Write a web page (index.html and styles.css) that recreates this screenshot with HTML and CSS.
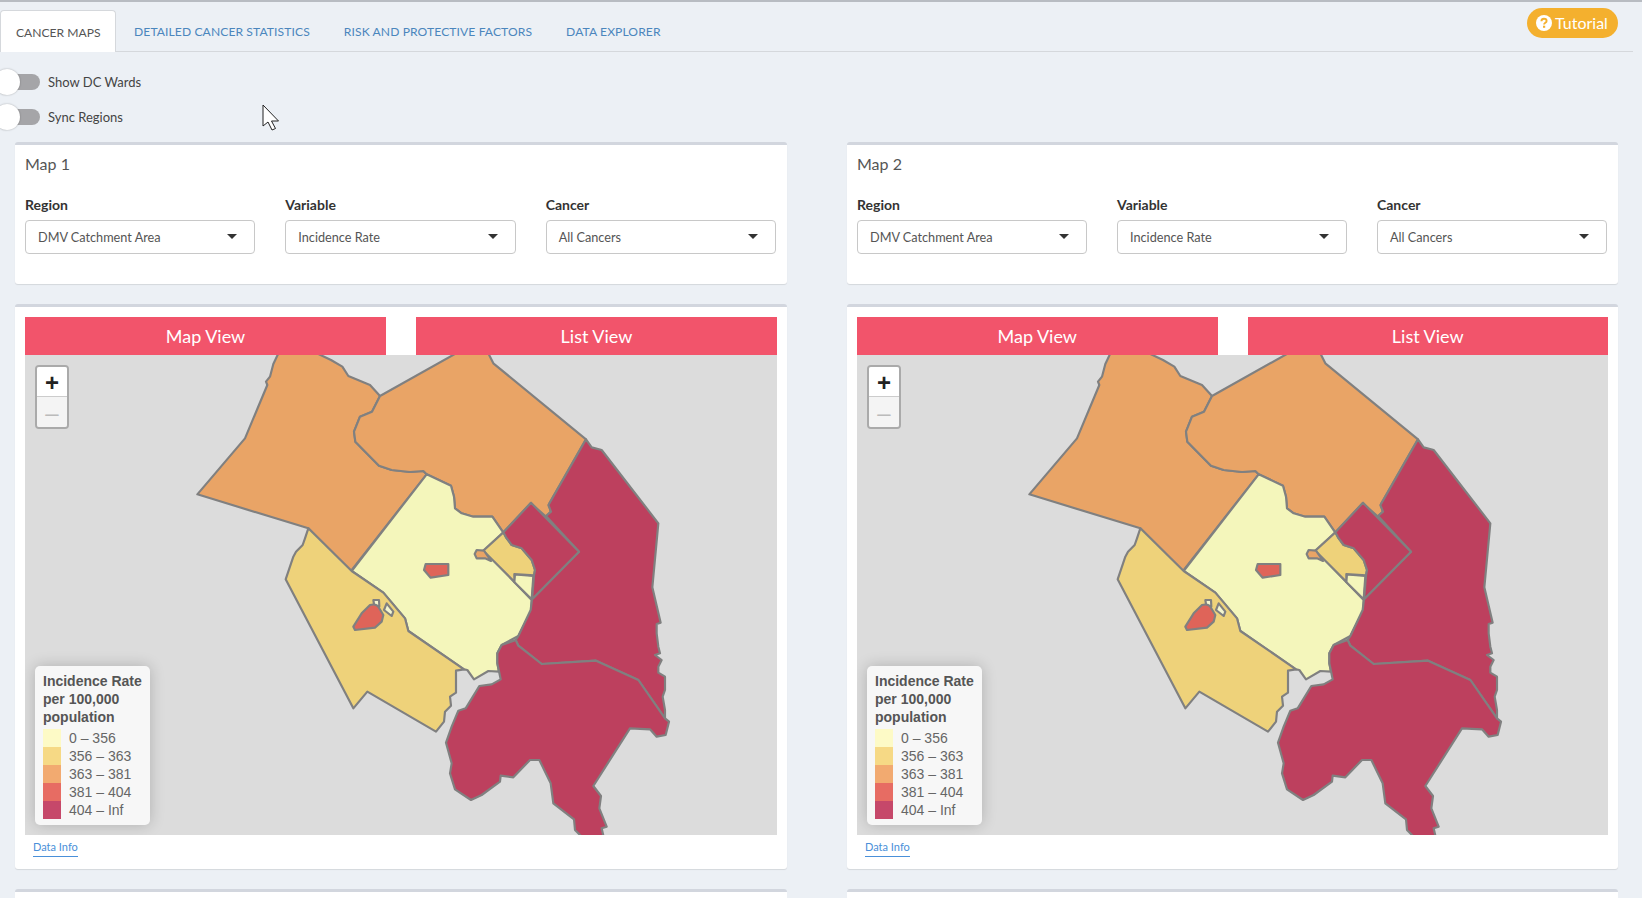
FILE: index.html
```html
<!DOCTYPE html>
<html lang="en">
<head>
    <meta charset="UTF-8">
    <meta name="viewport" content="width=device-width, initial-scale=1.0">
    <title>Cancer Maps</title>
    <link rel="stylesheet" href="styles.css">
</head>
<body>
    <!-- Top tabs -->
    <header class="tabbar">
        <nav class="tabs">
            <a class="tab active">CANCER MAPS</a>
            <a class="tab">DETAILED CANCER STATISTICS</a>
            <a class="tab">RISK AND PROTECTIVE FACTORS</a>
            <a class="tab">DATA EXPLORER</a>
        </nav>
        <button class="tutorial">
            <svg class="tutorial-icon" viewBox="0 0 16 16">
                <circle cx="8" cy="8" r="8" fill="#fff"/>
                <path d="M5.4 6.2C5.5 4.6 6.6 3.8 8 3.8c1.5 0 2.6.9 2.6 2.1 0 1.900-2.500 1.900-2.500 3.700" fill="none" stroke="#f4b02e" stroke-width="1.900"/>
                <rect x="7" y="10.700" width="2.200" height="2.100" fill="#f4b02e"/>
            </svg>
            Tutorial
        </button>
    </header>

    <!-- Switches -->
    <div class="switches">
        <div class="switch-row"><span class="switch"></span>Show DC Wards</div>
        <div class="switch-row"><span class="switch"></span>Sync Regions</div>
    </div>

    <svg class="cursor" viewBox="0 0 18 27">
        <path d="M1 1V22L6 18L10 26L13.500 24.500L9.500 17L16.500 17Z" fill="#fff" stroke="#222" stroke-width="1"/>
    </svg>

    <main class="columns">
        <!-- Map 1 -->
        <section class="column">
            <div class="panel controls">
                <h3 class="panel-title">Map 1</h3>
                <div class="fields">
                    <div class="field"><label>Region</label><div class="select">DMV Catchment Area</div></div>
                    <div class="field"><label>Variable</label><div class="select">Incidence Rate</div></div>
                    <div class="field"><label>Cancer</label><div class="select">All Cancers</div></div>
                </div>
            </div>
            <div class="panel map-panel">
                <div class="view-buttons">
                    <div class="view-button">Map View</div>
                    <div class="view-button">List View</div>
                </div>
                <div class="map">
                    <svg class="map-svg" viewBox="-435 45 2256 1440">
                        <defs>
                            <g id="dmvShapes" stroke="#808080" stroke-width="6.500" stroke-linejoin="round">
                                <!-- west -->
                                <polygon fill="#e9a466" points="330,30 310,72 300,110 288,125 292,135 225,295 82,463 415,565 543,693 770,403 760,393 720,396 665,390 627,377 556,305 552,275 570,230 606,215 630,168 600,135 535,108 517,80 483,60 420,30"/>
                                <!-- north -->
                                <polygon fill="#e9a466" points="876,30 630,168 606,215 570,230 552,275 556,305 627,377 665,390 720,396 760,393 770,403 843,437 852,470 855,505 875,520 910,530 967,530 1000,578 1082,490 1128,530 1142,515 1137,492 1248,298 970,70 950,30"/>
                                <!-- center -->
                                <polygon fill="#f4f6bb" points="770,403 843,437 852,470 855,505 875,520 910,530 967,530 1000,578 942,632 1032,725 1085,780 1083,815 1045,888 995,915 982,940 982,970 987,995 955,993 912,1018 892,990 882,988 715,873 705,835 640,758 545,693"/>
                                <polygon fill="#f4f6bb" points="1035,703 1090,708 1085,778 1032,725"/>
                                <!-- south west -->
                                <g transform="translate(300 480)">
                                    <polygon fill="#eed27a" points="115,85 105,115 98,135 78,155 70,170 47,238 250,625 292,575 498,695 522,665 525,635 543,617 540,590 558,578 558,512 582,508 415,393 405,355 340,278 245,213"/>
                                    <polygon fill="#eed27a" points="700,97 640,152 733,245 733,222 792,226 795,210 785,180 755,145 725,135 708,112"/>
                                    <!-- east -->
                                    <polygon fill="#bd405e" points="948,-182 965,-158 995,-150 1165,70 1147,262 1172,368 1160,372 1160,400 1165,440 1170,460 1155,465 1175,480 1165,500 1165,518 1185,530 1185,570 1178,590 1185,630 1185,655 1105,540 978,482 815,492 745,437 737,420 745,408 782,330 786,298 927,155 828,48 843,35 835,15 837,12"/>
                                    <!-- south -->
                                    <polygon fill="#bd405e" points="737,420 745,437 815,492 978,482 1105,540 1185,655 1197,665 1187,705 1160,710 1140,688 1080,685 970,858 993,888 988,925 1010,980 995,985 1003,1020 945,1020 915,990 912,958 850,910 842,850 808,780 780,780 730,832 692,827 690,845 635,885 603,900 555,868 540,820 545,790 528,728 545,680 565,632 587,625 628,558 665,553 692,538 682,490 682,460 695,435"/>
                                    <!-- dc -->
                                    <polygon fill="#bd405e" points="783,8 700,97 708,112 725,135 755,145 785,180 795,210 792,226 786,298 927,155"/>
                                    <polygon fill="#df6459" points="467,192 535,192 535,225 482,233 462,210"/>
                                    <polygon fill="#df6459" points="300,315 320,312 340,345 335,365 315,383 255,390 250,380 275,340"/>
                                    <polygon fill="#f4f6cf" points="310,300 327,300 328,320 312,312"/>
                                    <polygon fill="#f4f6cf" points="350,310 370,335 365,348 342,330"/>
                                </g>
                                <polygon fill="#e9a466" points="920,630 942,632 963,663 945,655 920,655 914,642"/>
                            </g>
                        </defs>
                        <use href="#dmvShapes"/>
                    </svg>
                    <div class="zoom-control">
                        <div class="zoom-in">+</div>
                        <div class="zoom-out">&ndash;</div>
                    </div>
                    <div class="legend">
                        <div class="legend-title">Incidence Rate<br>per 100,000<br>population</div>
                        <div class="legend-row"><i class="swatch s1"></i>0 &ndash; 356</div>
                        <div class="legend-row"><i class="swatch s2"></i>356 &ndash; 363</div>
                        <div class="legend-row"><i class="swatch s3"></i>363 &ndash; 381</div>
                        <div class="legend-row"><i class="swatch s4"></i>381 &ndash; 404</div>
                        <div class="legend-row"><i class="swatch s5"></i>404 &ndash; Inf</div>
                    </div>
                </div>
                <a class="data-info">Data Info</a>
            </div>
            <div class="panel stub"></div>
        </section>

        <!-- Map 2 -->
        <section class="column">
            <div class="panel controls">
                <h3 class="panel-title">Map 2</h3>
                <div class="fields">
                    <div class="field"><label>Region</label><div class="select">DMV Catchment Area</div></div>
                    <div class="field"><label>Variable</label><div class="select">Incidence Rate</div></div>
                    <div class="field"><label>Cancer</label><div class="select">All Cancers</div></div>
                </div>
            </div>
            <div class="panel map-panel">
                <div class="view-buttons">
                    <div class="view-button">Map View</div>
                    <div class="view-button">List View</div>
                </div>
                <div class="map">
                    <svg class="map-svg" viewBox="-435 45 2256 1440">
                        <use href="#dmvShapes"/>
                    </svg>
                    <div class="zoom-control">
                        <div class="zoom-in">+</div>
                        <div class="zoom-out">&ndash;</div>
                    </div>
                    <div class="legend">
                        <div class="legend-title">Incidence Rate<br>per 100,000<br>population</div>
                        <div class="legend-row"><i class="swatch s1"></i>0 &ndash; 356</div>
                        <div class="legend-row"><i class="swatch s2"></i>356 &ndash; 363</div>
                        <div class="legend-row"><i class="swatch s3"></i>363 &ndash; 381</div>
                        <div class="legend-row"><i class="swatch s4"></i>381 &ndash; 404</div>
                        <div class="legend-row"><i class="swatch s5"></i>404 &ndash; Inf</div>
                    </div>
                </div>
                <a class="data-info">Data Info</a>
            </div>
            <div class="panel stub"></div>
        </section>
    </main>
</body>
</html>
```

FILE: styles.css
```css
html, body {
    margin: 0;
    height: 100%;
    overflow: hidden;
}

body {
    position: relative;
    background-color: #ecf0f5;
    border-top: 2px solid #b8bcc2;
    box-sizing: border-box;
    font-family: Lato, "Noto Sans", sans-serif;
    color: #444;
}

/* Tabs */
.tabbar {
    display: flex;
    justify-content: space-between;
    align-items: flex-start;
    height: 50px;
    box-sizing: border-box;
    margin-right: 9px;
    border-bottom: 1px solid #d5d8dc;
}

.tabs {
    display: flex;
    padding-top: 8px;
}

.tab {
    height: 41px;
    box-sizing: border-box;
    padding: 0 17px;
    line-height: 43px;
    font-size: 12.100px;
    letter-spacing: 0.1px;
    color: #4b86bd;
}

.tab.active {
    width: 116px;
    margin-right: 1px;
    padding: 0 0 0 15px;
    background-color: #fff;
    border: 1px solid #d5d8dc;
    border-bottom: none;
    border-radius: 4px 4px 0 0;
    letter-spacing: 0;
    color: #555;
    height: 42px;
}

.tutorial {
    display: flex;
    align-items: center;
    gap: 3px;
    width: 91px;
    height: 30px;
    margin: 6px 15px 0 0;
    padding: 0 0 2px 9px;
    border: none;
    border-radius: 15px;
    background-color: #f4b02e;
    color: #fff;
    font-family: inherit;
    font-size: 16px;
}

.tutorial-icon {
    width: 16px;
    height: 16px;
    margin-top: 2px;
}

/* Switches */
.switches {
    padding-top: 12px;
    margin-bottom: 8px;
}

.switch-row {
    display: flex;
    align-items: center;
    height: 35px;
    font-size: 13px;
    color: #444;
}

.switch {
    position: relative;
    width: 40px;
    height: 16px;
    margin-right: 8px;
    border-radius: 0 8px 8px 0;
    background-color: #a5a5a8;
}

.switch::after {
    content: "";
    position: absolute;
    left: -6px;
    top: -5px;
    width: 26px;
    height: 26px;
    border-radius: 50%;
    background-color: #fff;
    box-shadow: 0 0 2px rgba(0, 0, 0, 0.3);
}

.cursor {
    position: absolute;
    left: 262px;
    top: 102px;
    width: 18px;
    height: 27px;
}

/* Columns and panels */
.columns {
    display: grid;
    grid-template-columns: 772px 771px;
    gap: 60px;
    margin: 7px 0 0 15px;
}

.panel {
    margin-bottom: 20px;
    background-color: #fff;
    border-top: 3px solid #d2d6de;
    border-radius: 3px;
    box-shadow: 0 1px 1px rgba(0, 0, 0, 0.1);
}

/* Next row of panels, cut off by the window */
.stub {
    height: 6px;
    margin-bottom: 0;
    border-radius: 3px 3px 0 0;
    box-shadow: none;
}

.controls {
    height: 142px;
    box-sizing: border-box;
    padding: 0 11px 0 10px;
}

.panel-title {
    margin: 0;
    padding-top: 8px;
    line-height: 22px;
    font-size: 16px;
    font-weight: 400;
    color: #555;
}

.fields {
    display: grid;
    grid-template-columns: repeat(3, 1fr);
    gap: 30px;
    margin-top: 20px;
}

.field label {
    display: block;
    line-height: 20px;
    margin-bottom: 5px;
    font-size: 14px;
    font-weight: 700;
    color: #333;
}

.select {
    position: relative;
    height: 34px;
    box-sizing: border-box;
    padding-left: 12px;
    line-height: 33px;
    background-color: #fff;
    border: 1px solid #c8c8c8;
    border-radius: 4px;
    font-size: 12.700px;
    color: #555;
}

.select::after {
    content: "";
    position: absolute;
    right: 17px;
    top: 13px;
    border-top: 5px solid #333;
    border-left: 5px solid transparent;
    border-right: 5px solid transparent;
}

.map-panel {
    height: 565px;
    box-sizing: border-box;
    padding: 10px 10px 0;
}

.view-buttons {
    display: grid;
    grid-template-columns: 1fr 1fr;
    gap: 30px;
}

.view-button {
    height: 38px;
    line-height: 38px;
    text-align: center;
    background-color: #f2546b;
    color: #fff;
    font-size: 18px;
}

/* Leaflet style map */
.map {
    position: relative;
    height: 480px;
    background-color: #dcdcdc;
    overflow: hidden;
}

.map-svg {
    display: block;
    width: 752px;
    height: 480px;
}

.zoom-control {
    position: absolute;
    left: 10px;
    top: 10px;
    width: 30px;
    border: 2px solid #aaa;
    border-radius: 4px;
    overflow: hidden;
    text-align: center;
    font-family: "Liberation Sans", sans-serif;
    font-size: 24px;
}

.zoom-in, .zoom-out {
    height: 30px;
    line-height: 32px;
}

.zoom-in {
    height: 29px;
    background-color: #fff;
    border-bottom: 1px solid #ccc;
    color: #222;
    font-weight: 700;
}

.zoom-out {
    background-color: #f4f4f4;
    color: #bbb;
}

.legend {
    position: absolute;
    left: 10px;
    bottom: 10px;
    width: 115px;
    height: 159px;
    box-sizing: border-box;
    padding: 6px 8px;
    background-color: #f7f7f7;
    border-radius: 5px;
    box-shadow: 0 0 15px rgba(0, 0, 0, 0.2);
    font-family: "Liberation Sans", Arial, sans-serif;
    font-size: 14px;
    line-height: 18px;
    color: #666;
}

.legend-title {
    margin-bottom: 3px;
    font-weight: 700;
    color: #555;
}

.legend-row {
    display: flex;
    align-items: center;
    height: 18px;
}

.swatch {
    width: 18px;
    height: 18px;
    margin-right: 8px;
}

.s1 { background-color: #fdfac6; }
.s2 { background-color: #f6d985; }
.s3 { background-color: #f2aa70; }
.s4 { background-color: #e76c63; }
.s5 { background-color: #c6486a; }

.data-info {
    display: inline-block;
    margin: 4px 0 0 8px;
    padding-bottom: 2px;
    border-bottom: 1px solid #4a90d9;
    line-height: 15px;
    font-size: 11px;
    color: #4a90d9;
}
```
